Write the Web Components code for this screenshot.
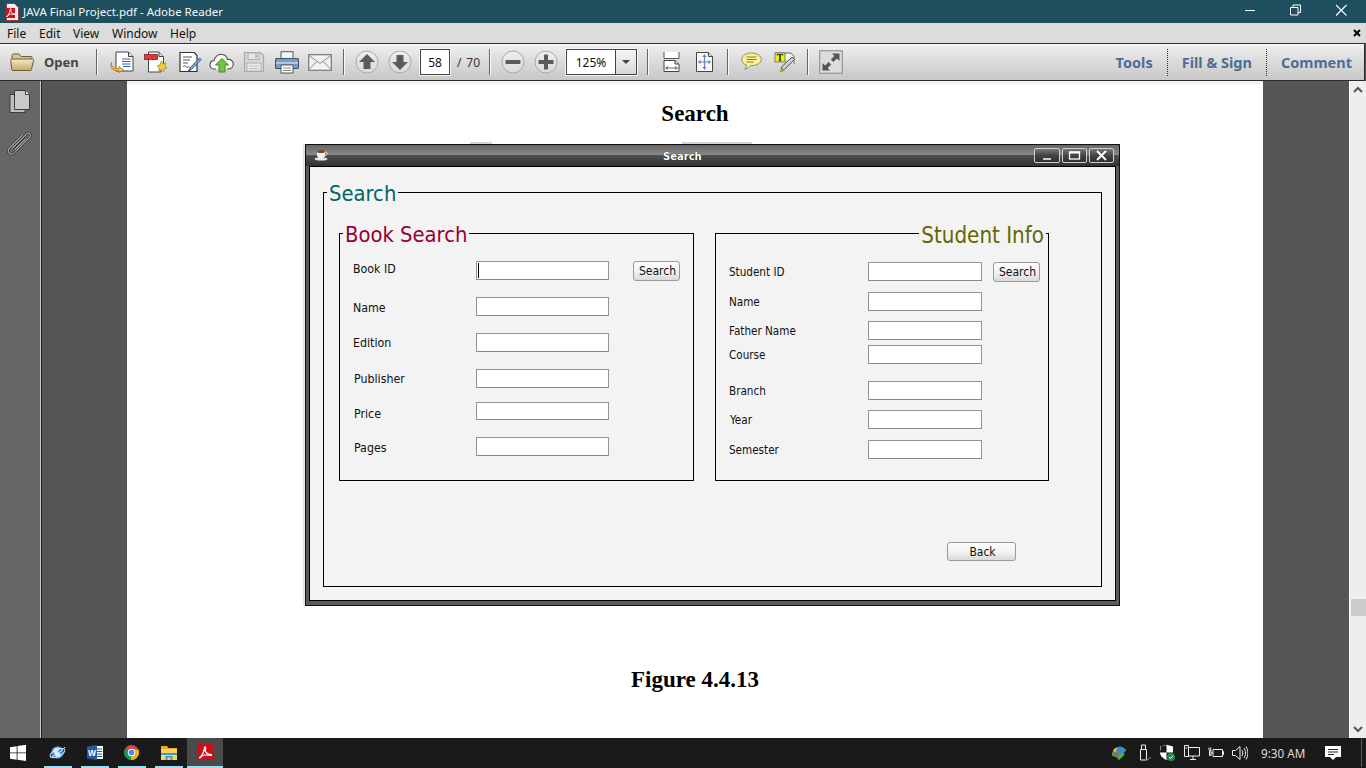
<!DOCTYPE html>
<html lang="en"><head><meta charset="utf-8"><title>JAVA Final Project.pdf - Adobe Reader</title>
<style>
html,body{margin:0;padding:0;background:#555;overflow:hidden}
body{width:1366px;height:768px}
x-app{font-family:"Noto Sans","Open Sans",sans-serif}
</style></head>
<body>
<x-app>
  <x-titlebar>JAVA Final Project.pdf - Adobe Reader</x-titlebar>
  <x-menubar></x-menubar>
  <x-toolbar></x-toolbar>
  <x-workspace>
    <x-rail></x-rail>
    <x-docview>
      <x-page>
        <x-heading>Search</x-heading>
        <x-java-window heading="Search">
          <x-group legend="Search" tone="#006666" style="width:779px;height:409px;--ly:32px">
            <div style="display:flex;gap:21px;padding:13px 0 0 15px">
              <x-group legend="Book Search" tone="#990033" style="width:355px;height:262px;--pad:14px 0 0 13px">
                <x-row style="--lw:123px;--fw:133px" caret lo="-3px">Book ID<x-swing-button slot="action" style="margin-left:24px;width:47px">Search</x-swing-button></x-row>
                <x-row style="--lw:123px;--fw:133px;margin-top:17px" lo="3px">Name</x-row>
                <x-row style="--lw:123px;--fw:133px;margin-top:17px">Edition</x-row>
                <x-row style="--lw:122px;--fw:133px;--li:1px;margin-top:17px">Publisher</x-row>
                <x-row style="--lw:122px;--fw:133px;--li:1px;--h:18px;margin-top:14px" lo="5px">Price</x-row>
                <x-row style="--lw:122px;--fw:133px;--li:1px;margin-top:17px" lo="2px">Pages</x-row>
              </x-group>
              <x-group legend="Student Info" tone="#666600" end style="width:334px;height:262px;--pad:15px 0 0 13px;--lfs:11.6px;--lgs:22.2px">
                <x-row style="--lw:139px;--fw:114px">Student ID<x-swing-button slot="action" style="margin-left:11px;width:47px">Search</x-swing-button></x-row>
                <x-row style="--lw:139px;--fw:114px;margin-top:11px">Name</x-row>
                <x-row style="--lw:139px;--fw:114px;margin-top:10px">Father Name</x-row>
                <x-row style="--lw:139px;--fw:114px;margin-top:5px">Course</x-row>
                <x-row style="--lw:139px;--fw:114px;margin-top:17px">Branch</x-row>
                <x-row style="--lw:138px;--li:1px;--fw:114px;margin-top:10px">Year</x-row>
                <x-row style="--lw:139px;--fw:114px;margin-top:11px">Semester</x-row>
              </x-group>
            </div>
            <div style="display:flex;padding:61px 0 0 623px">
              <x-swing-button style="width:69px;height:19px">Back</x-swing-button>
            </div>
          </x-group>
        </x-java-window>
        <x-heading style="margin-top:60px">Figure 4.4.13</x-heading>
      </x-page>
      <x-scrollbar></x-scrollbar>
    </x-docview>
  </x-workspace>
  <x-taskbar></x-taskbar>
</x-app>
<script>
function el(name, html, setup){
  customElements.define(name, class extends HTMLElement{
    constructor(){super();this.attachShadow({mode:'open'});}
    connectedCallback(){
      this.shadowRoot.innerHTML = typeof html==='function'?html(this):html;
      if(setup)setup(this);
    }
  });
}

el('x-app',`<style>:host{display:flex;flex-direction:column;width:1366px;height:768px;overflow:hidden}</style><slot></slot>`);

el('x-titlebar',`<style>
:host{display:flex;align-items:center;height:23px;background:#1e4f5f;color:#f4f8f9;font-size:11.500px;flex:none}
.ic{margin-left:5px;width:14px;height:18px;flex:none}
.t{margin-left:4px;white-space:nowrap}
.c{margin-left:auto;display:flex;flex:none}
svg{display:block}
</style>
<svg class="ic" viewBox="0 0 14 18"><path d="M1.500.5h8l4 4v13h-12z" fill="#f6eeee" stroke="#a33"/><path d="M0 5h10v10H0z" fill="#c3161c"/><path d="M1.500 13.500C3 13 4.500 10 5 8c.2-1 0-2.500.6-2.500s.6 1.500.2 2.800c.6 1.500 2 2.500 3.700 2.400.7 0 .7.800 0 .8-1.700 0-3.700-.6-5 0-1 .5-2.200 3-3 2Z" fill="none" stroke="#fff" stroke-width=".9"/></svg>
<span class="t"><slot></slot></span>
<span class="c">
<svg width="46" height="23" viewBox="0 0 46 23"><path d="M24 10.500h10" stroke="#fff" stroke-width="1"/></svg>
<svg width="46" height="23" viewBox="0 0 46 23"><path d="M23.500 7.500h7.500v7.500h-7.500z M26 7.500v-2.500h7.500v7.500h-2.500" fill="none" stroke="#fff" stroke-width="1"/></svg>
<svg width="46" height="23" viewBox="0 0 46 23" style="margin-right:7px"><path d="M23 5l10.500 10.500M33.500 5L23 15.500" stroke="#fff" stroke-width="1.100"/></svg>
</span>`);

el('x-menubar',`<style>
:host{display:flex;align-items:center;height:20px;background:#dcdcdc;color:#111;font-size:12px;flex:none}
span{white-space:nowrap;flex:none}
.x{margin-left:auto;margin-right:5px;font-size:0}
</style>
<span style="margin-left:7px;width:32px">File</span><span style="width:34px">Edit</span><span style="width:39px">View</span><span style="width:58px">Window</span><span>Help</span>
<span class="x"><svg width="8" height="8" viewBox="0 0 8 8" style="display:block"><path d="M1 1l6 6M7 1L1 7" stroke="#000" stroke-width="2"/></svg></span>`);

const round=(p)=>`<svg class="i" width="24" height="24" viewBox="0 0 24 24"><defs><linearGradient id="rg" x1="0" y1="0" x2="0" y2="1"><stop offset="0" stop-color="#eeeeee"/><stop offset="1" stop-color="#dadada"/></linearGradient></defs><circle cx="12" cy="12" r="11" fill="url(#rg)" stroke="#a9a9a9"/><path d="${p}" fill="#5b5b5b"/></svg>`;
const sep=(m)=>`<i class="sep" style="margin-left:${m}px"></i>`;
const ic=(m,w,h,body)=>`<svg class="i" style="margin-left:${m}px" width="${w}" height="${h}" viewBox="0 0 ${w} ${h}">${body}</svg>`;
el('x-toolbar',`<style>
:host{display:flex;align-items:center;height:36px;flex:none;margin-right:1px;border:1px solid #2a2a2a;border-width:1px 1px 1px 0;background:linear-gradient(#efefef,#c7c7c7);box-shadow:inset 0 1px 0 #fafafa;color:#222;font-size:12px;white-space:nowrap}
.i{display:block;flex:none}
.sep{display:block;flex:none;width:1px;height:26px;background:#666;box-shadow:1px 0 0 #f7f7f7}
.open{margin-left:10px;width:33px;font-weight:700;font-size:13px;color:#444;flex:none}
.pg{box-sizing:border-box;margin-left:8px;width:30px;height:26px;flex:none;border:1px solid #444;outline:1px solid #f6f6f6;background:#fff;display:flex;align-items:center;justify-content:center;color:#111}
.of{margin-left:7px;width:23px;flex:none;color:#333;display:flex;justify-content:space-between}
.combo{box-sizing:border-box;margin-left:8px;width:71px;height:26px;flex:none;border:1px solid #444;outline:1px solid #f6f6f6;background:#fff;display:flex;align-items:center;color:#111}
.combo b{font-weight:400;flex:none;width:48px;text-align:center}
.combo u{flex:1;align-self:stretch;border-left:1px solid #444;background:linear-gradient(#f4f4f4,#d8d8d8);display:flex;align-items:center;justify-content:center}
.combo u::after{content:"";border:4px solid transparent;border-top:4px solid #444;border-bottom:0}
.r{margin-left:auto;display:flex;align-items:center;flex:none;font-weight:700;font-size:14.500px;color:#4f6c94;margin-right:12px}
.d{width:0;height:27px;border-left:1px dotted #333;margin:0 14px}
</style>
<svg class="i" style="margin-left:10px" width="24" height="20" viewBox="0 0 24 20"><defs><linearGradient id="f" x1="0" y1="0" x2="0" y2="1"><stop offset="0" stop-color="#f6ebc0"/><stop offset="1" stop-color="#c4ab6e"/></linearGradient></defs><path d="M2 17V3.500C2 2.500 2.500 2 3.500 2H9l2 2.500h10c.8 0 1 .5 1 1V8" fill="#d9c590" stroke="#6d5f3a"/><path d="M.8 8.500C.6 7.500 1 7 2 7h20.500c1 0 1.200.5 1 1.500L21.500 17.500c-.2.800-.6 1-1.500 1H3c-.8 0-1.200-.4-1.300-1Z" fill="url(#f)" stroke="#6d5f3a"/></svg>
<span class="open">Open</span>
${sep(19)}
${ic(13,24,22,`<path d="M6 1h12.500L23 5.500V20H6z" fill="#fff" stroke="#444"/><path d="M18.500 1v4.500H23" fill="#ddd" stroke="#444"/><path d="M12 8h8.500M12 10.500h8.500M12 13h8.500M13 15.500h7.500" stroke="#2f62c4" stroke-width="1.200"/><path d="M1.500 11.500C1 15.500 4 18 9 17.700V15.500l5 3.700-5 2.300v-1.800C3 20.500-.5 17 1.500 11.500Z" fill="#f5c24f" stroke="#a8751a" stroke-width=".8"/>`)}
${ic(10,24,24,`<path d="M4.500 2h10.500l4.500 4.500V18H17v4H4.500z" fill="#fff" stroke="#444"/><path d="M15 2v4.500h4.500" fill="#ddd" stroke="#444"/><rect x=".5" y="4.500" width="13" height="5" fill="#e3363b" stroke="#8a1e22" stroke-width=".8"/><path d="M17.500 11l1.500 2.800 3-.8-1 3 2 2-2.900.7-.6 3-2.200-2-2.800 1 .7-3-2.200-1.900 2.900-.8z" fill="#f6c838" stroke="#a8831a" stroke-width=".7"/>`)}
${ic(10,24,22,`<path d="M2 1.500h14l3 3V20.500H2z" fill="#fff" stroke="#333" stroke-width="1.200"/><path d="M5 6h9M5 9h7M5 12h5M5 16c1.500-2 2.500-1 3.500 0s2-1 3 0" stroke="#555" fill="none"/><path d="M12 17l-1.500 3 3-1.500 9.500-10-1.500-1.500z" fill="#8fb2dc" stroke="#34507c"/>`)}
${ic(7,25,22,`<path d="M7 18H5C2 18 .8 15.500 1 13.500c.2-2.500 2-3.800 4-3.800C6 6 9 3 13 3.500c3.500.3 5 2.800 5.500 5 3.200-.3 5.800 1.500 5.800 4.500 0 3-2.300 5-5 5h-1.500" fill="#fafafa" stroke="#555" stroke-width="1.200"/><path d="M13 7.500l6.500 6.500h-3.500v7h-6v-7H6.500z" fill="#73c34a" stroke="#3a8a22"/>`)}
${ic(9,22,22,`<path d="M1.500 1.500h16l3 3v16h-19z" fill="#d8d8d8" stroke="#a8a8a8" stroke-width="1.200"/><rect x="5" y="2" width="11" height="6.500" fill="#e6e6e6" stroke="#b0b0b0"/><rect x="12" y="3" width="2.500" height="4" fill="#bbb"/><rect x="4" y="12" width="14" height="8" fill="#eaeaea" stroke="#b0b0b0"/><path d="M6 15h10M6 17.500h10" stroke="#c0c0c0"/>`)}
${ic(10,24,23,`<rect x="6" y=".7" width="12" height="7" fill="#f4f4f4" stroke="#555"/><path d="M2 7.500h20c1 0 1.500.8 1.500 1.500v7c0 1-.6 1.500-1.500 1.500H2C1 17.500.5 17 .5 16V9c0-1 .6-1.500 1.500-1.500Z" fill="#7f9cc0" stroke="#3c5273" stroke-width="1.200"/><path d="M1 12h22" stroke="#c8d6e8" stroke-width="1.500"/><rect x="6" y="14" width="12" height="8" fill="#fff" stroke="#555"/><path d="M8 17h8M8 19.500h8" stroke="#888"/>`)}
${ic(9,24,17,`<rect x=".7" y=".7" width="22.600" height="15.600" fill="#f2f2f2" stroke="#777" stroke-width="1.200"/><path d="M1 1.500l11 8 11-8M1 15.500l8-8.300M23 15.500l-8-8.300" fill="none" stroke="#8a8a8a"/>`)}
${sep(11)}
<span style="margin-left:11px;flex:none">${round('M12 4l8 8h-4.500v7h-7v-7H4z')}</span>
<span style="margin-left:9px;flex:none">${round('M12 20l8-8h-4.500V5h-7v7H4z')}</span>
<span class="pg">58</span>
<span class="of"><span>/</span><span>70</span></span>
${sep(9)}
<span style="margin-left:11px;flex:none">${round('M5.500 10h13c.8 0 1 .5 1 1v2c0 .5-.2 1-1 1h-13c-.8 0-1-.5-1-1v-2c0-.5.2-1 1-1z')}</span>
<span style="margin-left:9px;flex:none">${round('M10 4.500h4V10h5.500v4H14v5.500h-4V14H4.500v-4H10z')}</span>
<span class="combo"><b>125%</b><u></u></span>
${sep(10)}
${ic(14,19,20,`<path d="M2 0v6.500h15V0" fill="#fff" stroke="#555"/><path d="M2 8.500h11l4 3.500V19.500H2z" fill="#fff" stroke="#444"/><path d="M13 8.500v3.500h4" fill="#ddd" stroke="#444"/><path d="M3.500 16h12" stroke="#6b83b5" stroke-width="1.200"/><path d="M6 13.800L3 16l3 2.200zM13 13.800l3 2.200-3 2.200z" fill="#6b83b5"/>`)}
${ic(14,19,20,`<path d="M1.500 .5h12L17.500 4.500V19.500h-16z" fill="#f6f6f6" stroke="#444"/><path d="M13.500 .5v4h4" fill="#ddd" stroke="#444"/><path d="M9.500 4v12M4 10h11" stroke="#6b83b5" stroke-width="1.200"/><path d="M7.500 5l2-3 2 3zM7.500 15l2 3 2-3zM5.500 8L2.800 10l2.700 2zM13.500 8l2.700 2-2.700 2z" fill="#6b83b5"/>`)}
${sep(13)}
${ic(13,21,20,`<path d="M10.500 1C5 1 .7 3.800.7 7.500c0 2.500 2 4.700 5 5.700-.2 1.500-1 3-2 4 2.500-.4 4.500-1.800 5.800-3.600h1c5.500 0 9.800-2.800 9.800-6.100S16 1 10.500 1Z" fill="#fbf191" stroke="#8b8b76" stroke-width="1"/><path d="M5.500 5h10M5.500 7.500h10M5.500 10h7" stroke="#8a7e3a"/>`)}
${ic(12,21,22,`<path d="M1 2h16l3 3.500V13" fill="#f3f3f3" stroke="#666"/><rect x="1" y="2" width="10" height="9" fill="#f4f000" stroke="#666" stroke-width=".8"/><text x="6" y="10" font-family="Liberation Serif,serif" font-size="9.500" font-weight="700" text-anchor="middle" fill="#222">T</text><path d="M7 20l1-4.500L18 6l2.500 2.500-10 9.800z" fill="#cfcfcf" stroke="#555"/><path d="M6.500 21l1.500-3.500 2 2z" fill="#e7c247" stroke="#8a7020" stroke-width=".6"/>`)}
${sep(12)}
${ic(11,24,24,`<rect x=".7" y=".7" width="22.600" height="22.600" fill="#dcdcdc" stroke="#9b9b9b" stroke-width="1.300"/><path d="M13 3.500h7.500V11l-2.700-2.500-3.400 3.400-2.500-2.500 3.400-3.400zM11 20.500H3.500V13l2.700 2.500 3.400-3.400 2.500 2.500-3.400 3.400z" fill="#555"/>`)}
<span class="r"><span>Tools</span><i class="d"></i><span>Fill &amp; Sign</span><i class="d"></i><span>Comment</span></span>`);

el('x-workspace',`<style>:host{display:flex;flex:1;min-height:0}</style><slot></slot>`);

el('x-rail',`<style>
:host{display:block;width:40px;flex:none;background:#666;border-right:1px solid #c8c8c8;box-shadow:1px 0 0 #222;margin-right:1px}
svg{display:block}
</style>
<svg width="40" height="80" viewBox="0 0 40 80">
<rect x="10" y="13.500" width="15" height="18" fill="#bdbdbd" stroke="#3c3c3c"/>
<path d="M14.500 9.500h11l4 4V28.500h-15z" fill="#c9c9c9" stroke="#3c3c3c"/><path d="M25.500 9.500v4h4" fill="#eee" stroke="#3c3c3c"/>
<g transform="translate(0 7)" fill="none">
<path d="M12 60.500l14.500-14.500c2.500-2.500 5.500 1 3 3.500l-15 15.200c-4 4-8.500-1-4.800-4.700L23 46.500M26 50.500L14.500 62" stroke="#1f1f1f" stroke-width="2.400"/>
<path d="M12 60.500l14.500-14.500c2.500-2.500 5.500 1 3 3.500l-15 15.200c-4 4-8.500-1-4.800-4.700L23 46.500M26 50.500L14.500 62" stroke="#a9a9a9" stroke-width="1.200"/>
</g>
</svg>`);

el('x-docview',`<style>:host{display:flex;flex:1;min-width:0;background:#555;padding-left:85px}</style><slot></slot>`);

el('x-page',`<style>:host{display:flex;flex-direction:column;box-sizing:border-box;width:1136px;margin-right:86px;flex:none;background:#fff;border-top:3px solid #f2f2f2;padding-top:16px;overflow:hidden}</style><slot></slot>`);

el('x-heading',`<style>:host{display:block;height:26px;text-align:center;font:700 23px/27px "Liberation Serif",serif;color:#000}</style><slot></slot>`);

el('x-scrollbar',`<style>
:host{display:flex;flex-direction:column;align-items:center;width:16px;flex:none;background:#eeeeee;border-left:1px solid #fff;padding-top:5px;box-sizing:content-box;height:652px}
.th{width:15px;height:17px;background:#cbcbcb;margin-top:505px;flex:none}
svg{display:block;flex:none}
</style>
<svg width="10" height="8" viewBox="0 0 10 8"><path d="M1 6l4-4 4 4" fill="none" stroke="#555" stroke-width="2"/></svg>
<div class="th"></div>
<svg style="margin-top:109px" width="10" height="8" viewBox="0 0 10 8"><path d="M1 2l4 4 4-4" fill="none" stroke="#555" stroke-width="2"/></svg>`);

el('x-java-window',h=>`<style>
:host{display:flex;flex-direction:column;box-sizing:border-box;width:815px;height:462px;margin-left:178px;margin-top:18px;flex:none;background:#5a5a5a;border:1px solid #111;box-shadow:-2px 0 0 #e6e6e6;position:relative}
:host::before{content:"";position:absolute;left:164px;top:-3px;width:282px;height:2px;background:linear-gradient(90deg,#d6d6d6 0 22px,transparent 22px 212px,#d6d6d6 212px)}
.bar{display:flex;align-items:center;height:21px;flex:none;padding-top:1px;box-sizing:border-box;background:linear-gradient(#666 0,#8a8a8a 10px,#505050 10px,#333 100%)}
.cup{margin-left:8px;flex:none;display:block;margin-top:-2px}
.t{margin-left:334px;color:#fff;font:700 10px "DejaVu Sans",sans-serif;text-shadow:0 0 1px #000;flex:none}
.ctl{margin-left:auto;display:flex;gap:2px;margin-right:5px;margin-top:-2px}
.ctl svg{display:block;box-sizing:border-box;width:25px;height:15px;border:1px solid #cfcfcf;border-radius:2px;background:linear-gradient(#777,#444 50%,#2f2f2f)}
.ctl svg:first-child{width:26px}
.body{flex:1;margin:0 3px 4px 3px;border:1px solid #000;background:#f3f3f3;padding:11px 0 0 13px;box-sizing:border-box;min-height:0}
</style>
<div class="bar">
<svg class="cup" width="15" height="12" viewBox="0 0 15 12"><ellipse cx="7" cy="10" rx="6.500" ry="1.600" fill="#e8e8e8"/><path d="M3 2h8v4c0 2-1.500 3.500-4 3.500S3 8 3 6z" fill="#f2f2f2"/><ellipse cx="7" cy="2.500" rx="4" ry="1.500" fill="#7a4a20"/><path d="M11 3c3 0 3 3 -.5 4" fill="none" stroke="#eee"/></svg>
<span class="t">${h.getAttribute('heading')}</span>
<span class="ctl">
<svg viewBox="0 0 24 13"><path d="M8 10h8" stroke="#fff" stroke-width="1.500"/></svg>
<svg viewBox="0 0 23 13"><rect x="6.500" y="3" width="10" height="7" fill="none" stroke="#fff" stroke-width="1.300"/><path d="M6.500 3.500h10" stroke="#fff" stroke-width="2"/></svg>
<svg viewBox="0 0 23 13"><path d="M7 2l9 9M16 2l-9 9" stroke="#fff" stroke-width="1.900"/></svg>
</span></div>
<div class="body"><slot></slot></div>`);

el('x-group',h=>`<style>
:host{display:block;box-sizing:border-box;flex:none}
fieldset{box-sizing:border-box;margin:0;padding:0;width:100%;height:100%;min-width:0;border:1px solid #000}
legend{padding:0 2px;margin-left:${h.hasAttribute('end')?'auto':'3px'};margin-right:${h.hasAttribute('end')?'2px':'0'};height:28px;white-space:nowrap;font:400 var(--lgs,21.800px)/var(--ly,30px) "DejaVu Sans",sans-serif;font-stretch:condensed;color:${h.getAttribute('tone')}}
.c{padding:var(--pad,0);display:flex;flex-direction:column}
</style>
<fieldset><legend>${h.getAttribute('legend')}</legend><div class="c"><slot></slot></div></fieldset>`);

el('x-row',h=>`<style>
:host{display:flex;align-items:center;height:var(--h,19px);flex:none;font:400 var(--lfs,12.300px) "DejaVu Sans",sans-serif;font-stretch:condensed;color:#111}
.l{width:var(--lw);margin-left:var(--li,0);flex:none;white-space:nowrap;margin-top:${h.getAttribute('lo')||'1px'}}
input{box-sizing:border-box;display:block;width:var(--fw);height:var(--h,19px);flex:none;margin:0;padding:0;border:1px solid #949494;border-bottom-color:#8a8a8a;border-radius:0;outline:0;background:#fff ${h.hasAttribute('caret')?'linear-gradient(#000,#000) 1px center/1px 15px no-repeat':''}}
</style>
<span class="l"><slot></slot></span><input type="text" aria-label="${h.textContent.trim()}"><slot name="action"></slot>`);

el('x-swing-button',`<style>
:host{display:flex;align-items:center;justify-content:center;box-sizing:border-box;height:20px;flex:none;border:1px solid #9a9a9a;border-radius:3px;padding:1px 0 0 2px;background:linear-gradient(#fbfbfb,#f2f2f2 55%,#d9d9d9);font:400 12px "DejaVu Sans",sans-serif;font-stretch:condensed;color:#111}
</style><slot></slot>`);

const tb=(body,active)=>`<span class="it${active?' a':''}">${body}</span>`;
el('x-taskbar',`<style>
:host{display:flex;align-items:stretch;height:30px;flex:none;background:#1a1a1a;color:#e6e6e6;font-size:11.700px}
svg{display:block;flex:none}
.st{width:39px;display:flex;align-items:center;padding-left:10px;box-sizing:border-box;flex:none}
.it{width:37px;flex:none;display:flex;align-items:center;justify-content:center;padding-bottom:2px;box-sizing:border-box;background:linear-gradient(#9fdcf0,#9fdcf0) center bottom/28px 2px no-repeat}
.it.a{width:36px;background:#4a4a4a linear-gradient(#9fdcf0,#9fdcf0) center bottom/36px 2px no-repeat}
.tray{margin-left:auto;display:flex;align-items:center;flex:none;padding-bottom:1px}
.clock{margin-left:13px;width:44px;white-space:nowrap;flex:none;color:#ddd}
.edge{width:1px;height:100%;background:#5c5c5c;flex:none;margin-left:20px;margin-right:4px;align-self:stretch}
</style>
<span class="st"><svg width="16" height="16" viewBox="0 0 16 16"><path d="M0 2.200l6.700-1V7.500H0zM7.500 1l8.500-1.200V7.500H7.500zM0 8.300h6.700v6.500L0 13.800zM7.500 8.300H16V16l-8.500-1.200z" fill="#fff"/></svg></span>
${tb(`<svg width="17" height="15" viewBox="0 0 17 15"><circle cx="8.500" cy="7.500" r="6.200" fill="#3b8fdc"/><path d="M4 5c2-2.500 5-3 7-2 1 2-3 2-2 4s3 1 3 3-3 3-5 2c0-2-3-4-3-7z" fill="#d7ecfa"/><path d="M1 12c3 0 10-4 15-10" fill="none" stroke="#eef" stroke-width="1"/><ellipse cx="8.500" cy="8" rx="8" ry="3.500" fill="none" stroke="#cfe3f6" transform="rotate(-25 8.500 8)"/></svg>`)}
${tb(`<svg width="16" height="15" viewBox="0 0 16 15"><rect x="5" y="1" width="11" height="13" fill="#fff"/><path d="M9 4h6M9 6.500h6M9 9h6M9 11.500h6" stroke="#2b579a"/><path d="M0 1.500L10 0v15L0 13.500z" fill="#2b579a"/><text x="5" y="11" font-family="Liberation Sans,sans-serif" font-size="8.500" font-weight="700" text-anchor="middle" fill="#fff">W</text></svg>`)}
${tb(`<svg width="15" height="15" viewBox="0 0 15 15"><circle cx="7.500" cy="7.500" r="7.500" fill="#db4437"/><path d="M7.500 7.500L1.100 3.800A7.500 7.500 0 0 0 7 15z" fill="#0f9d58"/><path d="M7.500 7.500L7 15A7.500 7.500 0 0 0 14.400 4.500H7.500z" fill="#f4b400"/><circle cx="7.500" cy="7.500" r="3.700" fill="#fff"/><circle cx="7.500" cy="7.500" r="2.800" fill="#4285f4"/></svg>`)}
${tb(`<svg width="16" height="15" viewBox="0 0 16 15"><path d="M0 1h6l1.500 2H16v2H0z" fill="#e9a825"/><path d="M0 4h16v11H0z" fill="#fdd35c"/><path d="M4.500 15v-4h7v4h-2v-2.500h-3V15z" fill="#3a9ad9"/><path d="M0 8h16v2H0z" fill="#3a9ad9"/></svg>`)}
${tb(`<svg width="16" height="16" viewBox="0 0 16 16"><rect width="16" height="16" rx="1" fill="#c8101a"/><path d="M2.500 13.500C4 13 6 9.500 7 6.500 7.300 5 7 2.800 8 2.800c1 0 .9 2.200.2 4C9 9 11 10.500 13.800 10.300c1 .1 1 1.300-.2 1.200C11 11.300 8 10.500 6 11.300 4.500 12 3 14.800 2.500 13.500Z" fill="none" stroke="#fff" stroke-width="1.200"/></svg>`,1)}
<span class="tray">
<svg width="16" height="16" viewBox="0 0 16 16"><path d="M1 11C.5 6 4 2 8 2c3 0 6 1 7.500 3L12 9l1 1-5 5-3-3z" fill="#3fa34d"/><circle cx="9" cy="5.500" r="4" fill="#3f88d8"/><path d="M1 8.500c1-1 4-1 7 2l-3 2z" fill="#e8482e"/><path d="M8 10l3-2 3 1-6 6z" fill="#4db848"/><path d="M2 6c1-2 2-3 4-3.500L5 7z" fill="#f1c232"/></svg>
<svg style="margin-left:11px" width="13" height="17" viewBox="0 0 13 17"><path d="M2.500 5.500h6V16h-6zM3.500 5.500V1h4v4.500M4.800 3h.1M6.200 3h.1" fill="none" stroke="#eee"/><path d="M8 15l1.500 1 3-3" fill="none" stroke="#999"/></svg>
<svg style="margin-left:8px" width="16" height="17" viewBox="0 0 16 17"><path d="M1 2.500L7.500.8 14 2.500V8c0 4-3 6.500-6.500 8C4 14.500 1 12 1 8z" fill="#fff"/><path d="M7.500 1v7.500H1v-2h.5V2.500zM7.500 8.500H14V10c-1 3-3.500 5-6.500 6z" fill="#1a1a1a"/><circle cx="12" cy="13" r="4" fill="#1e8a4a"/><path d="M10 13l1.500 1.500 2.500-2.800" fill="none" stroke="#fff" stroke-width="1"/></svg>
<svg style="margin-left:9px" width="16" height="16" viewBox="0 0 16 16"><path d="M4.500 2.500h11V11h-11M.5 .5h4v11h-4zM6 14.500h6M9 11v3.500M1.500 3h2" fill="none" stroke="#eee"/></svg>
<svg style="margin-left:8px" width="16" height="16" viewBox="0 0 16 16"><path d="M5 4.500h9.500v7H5zM14.500 6.500h1v3h-1M5 8H3M3 5.500v5H1.500v-5zM1 5V2.500M2.800 5V2.500" fill="none" stroke="#eee"/></svg>
<svg style="margin-left:8px" width="16" height="16" viewBox="0 0 16 16"><path d="M.5 5.500h3L8 1.500v13l-4.500-4h-3zM10 5c1 2 1 4 0 6M12 3c2 3 2 7 0 10M14 1.500c2.500 4 2.500 9 0 13" fill="none" stroke="#eee"/></svg>
<span class="clock">9:30 AM</span>
<svg style="margin-left:20px" width="16" height="16" viewBox="0 0 16 16"><path d="M0 1h16v11h-5l-3 3-3-3H0z" fill="#fff"/><path d="M3 4.500h10M3 7h10M3 9.500h6" stroke="#222"/></svg>
<span class="edge"></span>
</span>`);
</script>
</body></html>
